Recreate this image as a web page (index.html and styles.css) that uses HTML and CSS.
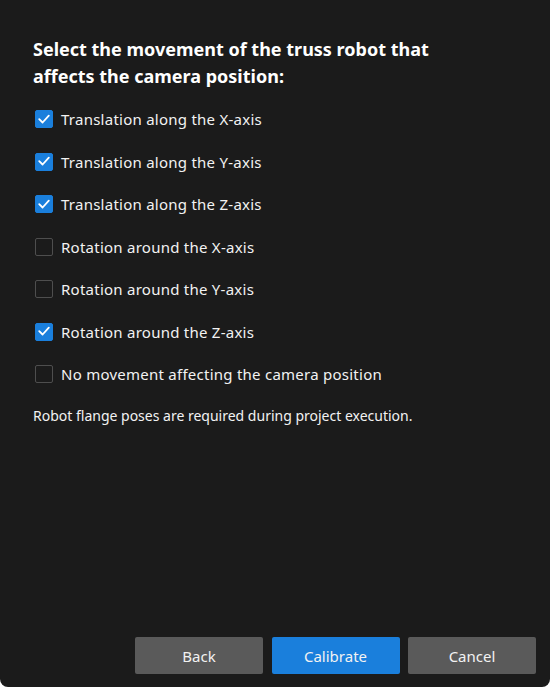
FILE: index.html
```html
<!DOCTYPE html>
<html>
<head>
<meta charset="utf-8">
<link rel="stylesheet" href="styles.css">
</head>
<body>
<div class="dialog">
  <div class="content">
    <h1 class="title">Select the movement of the truss robot that affects the camera position:</h1>
    <ul class="options">
      <li class="option"><span class="box checked"><svg viewBox="0 0 18 18"><path d="M4.2 9.2 L7.6 12.5 L13.8 5.6" /></svg></span><span class="label">Translation along the X-axis</span></li>
      <li class="option"><span class="box checked"><svg viewBox="0 0 18 18"><path d="M4.2 9.2 L7.6 12.5 L13.8 5.6" /></svg></span><span class="label">Translation along the Y-axis</span></li>
      <li class="option"><span class="box checked"><svg viewBox="0 0 18 18"><path d="M4.2 9.2 L7.6 12.5 L13.8 5.6" /></svg></span><span class="label">Translation along the Z-axis</span></li>
      <li class="option"><span class="box"></span><span class="label">Rotation around the X-axis</span></li>
      <li class="option"><span class="box"></span><span class="label">Rotation around the Y-axis</span></li>
      <li class="option"><span class="box checked"><svg viewBox="0 0 18 18"><path d="M4.2 9.2 L7.6 12.5 L13.8 5.6" /></svg></span><span class="label">Rotation around the Z-axis</span></li>
      <li class="option"><span class="box"></span><span class="label">No movement affecting the camera position</span></li>
    </ul>
    <p class="note">Robot flange poses are required during project execution.</p>
  </div>
  <div class="footer">
    <button class="btn">Back</button>
    <button class="btn primary">Calibrate</button>
    <button class="btn">Cancel</button>
  </div>
</div>
</body>
</html>
```
FILE: styles.css
```css
html {
  background: #ffffff;
}
body {
  margin: 0;
  width: 550px;
  height: 687px;
  font-family: "Noto Sans", "Open Sans", sans-serif;
  color: #f2f2f2;
}
.dialog {
  height: 687px;
  box-sizing: border-box;
  background: #1b1b1b;
  border-radius: 0 0 8px 8px;
  display: flex;
  flex-direction: column;
  padding: 36px 14px 13px 33px;
}
.content {
  flex: 1;
}
.title {
  margin: 0;
  font-size: 18px;
  font-weight: 700;
  line-height: 27px;
  width: 440px;
  color: #ffffff;
}
.options {
  list-style: none;
  margin: 18px 0 0 0;
  padding: 0;
  display: flex;
  flex-direction: column;
  gap: 20.5px;
}
.option {
  display: flex;
  align-items: center;
  height: 22px;
  padding-left: 2px;
}
.box {
  width: 18px;
  height: 18px;
  box-sizing: border-box;
  border: 1.5px solid #4e4e4e;
  border-radius: 2px;
  margin-right: 8px;
  display: flex;
}
.box.checked {
  background: #1a7fdc;
  border-color: #1a7fdc;
}
.box svg {
  width: 18px;
  height: 18px;
  margin: -1.5px;
}
.box path {
  fill: none;
  stroke: #ffffff;
  stroke-width: 1.8;
  stroke-linecap: round;
  stroke-linejoin: round;
}
.label {
  font-size: 15px;
  letter-spacing: 0.25px;
}
.note {
  margin: 21px 0 0 0;
  font-size: 14px;
  line-height: 20px;
}
.footer {
  display: flex;
  justify-content: flex-end;
  gap: 8.5px;
}
.btn {
  width: 128px;
  height: 37px;
  border: none;
  border-radius: 2px;
  background: #5a5a5a;
  color: #f2f2f2;
  font-family: "Noto Sans", "Open Sans", sans-serif;
  font-size: 15px;
  padding: 0;
}
.btn.primary {
  background: #1a7fdc;
}
```
